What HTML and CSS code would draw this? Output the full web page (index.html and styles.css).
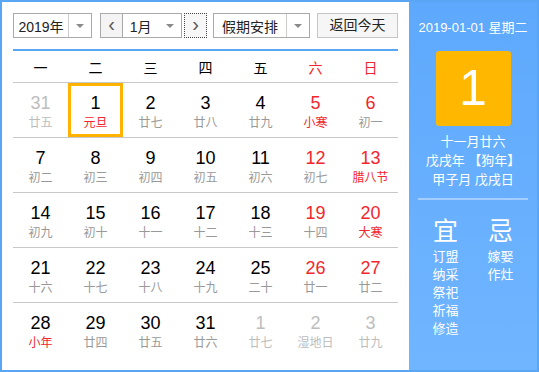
FILE: index.html
```html
<!DOCTYPE html>
<html lang="zh-CN">
<head>
    <meta charset="UTF-8">
    <title>万年历</title>
    <link rel="stylesheet" href="styles.css">
</head>
<body>
    <div class="calendar">
        <div class="main">
            <div class="toolbar">
                <div class="select year-select">
                    <span class="select-text">2019年</span>
                    <span class="select-arrow"><i></i></span>
                </div>
                <div class="month-group">
                    <span class="nav-btn">&lsaquo;</span>
                    <div class="select month-select">
                        <span class="select-text">1月</span>
                        <span class="select-arrow plain"><i></i></span>
                    </div>
                    <span class="nav-btn focus">&rsaquo;</span>
                </div>
                <div class="select holiday-select">
                    <span class="select-text">假期安排</span>
                    <span class="select-arrow"><i></i></span>
                </div>
                <span class="today-btn">返回今天</span>
            </div>

            <div class="weekdays">
                <span>一</span><span>二</span><span>三</span><span>四</span><span>五</span>
                <span class="red">六</span><span class="red">日</span>
            </div>

            <div class="days">
                <div class="row">
                    <div class="day other"><b>31</b><small>廿五</small></div>
                    <div class="day active"><b>1</b><small class="red">元旦</small></div>
                    <div class="day"><b>2</b><small>廿七</small></div>
                    <div class="day"><b>3</b><small>廿八</small></div>
                    <div class="day"><b>4</b><small>廿九</small></div>
                    <div class="day weekend"><b>5</b><small class="red">小寒</small></div>
                    <div class="day weekend"><b>6</b><small>初一</small></div>
                </div>
                <div class="row">
                    <div class="day"><b>7</b><small>初二</small></div>
                    <div class="day"><b>8</b><small>初三</small></div>
                    <div class="day"><b>9</b><small>初四</small></div>
                    <div class="day"><b>10</b><small>初五</small></div>
                    <div class="day"><b>11</b><small>初六</small></div>
                    <div class="day weekend"><b>12</b><small>初七</small></div>
                    <div class="day weekend"><b>13</b><small class="red">腊八节</small></div>
                </div>
                <div class="row">
                    <div class="day"><b>14</b><small>初九</small></div>
                    <div class="day"><b>15</b><small>初十</small></div>
                    <div class="day"><b>16</b><small>十一</small></div>
                    <div class="day"><b>17</b><small>十二</small></div>
                    <div class="day"><b>18</b><small>十三</small></div>
                    <div class="day weekend"><b>19</b><small>十四</small></div>
                    <div class="day weekend"><b>20</b><small class="red">大寒</small></div>
                </div>
                <div class="row">
                    <div class="day"><b>21</b><small>十六</small></div>
                    <div class="day"><b>22</b><small>十七</small></div>
                    <div class="day"><b>23</b><small>十八</small></div>
                    <div class="day"><b>24</b><small>十九</small></div>
                    <div class="day"><b>25</b><small>二十</small></div>
                    <div class="day weekend"><b>26</b><small>廿一</small></div>
                    <div class="day weekend"><b>27</b><small>廿二</small></div>
                </div>
                <div class="row">
                    <div class="day"><b>28</b><small class="red">小年</small></div>
                    <div class="day"><b>29</b><small>廿四</small></div>
                    <div class="day"><b>30</b><small>廿五</small></div>
                    <div class="day"><b>31</b><small>廿六</small></div>
                    <div class="day other"><b>1</b><small>廿七</small></div>
                    <div class="day other"><b>2</b><small>湿地日</small></div>
                    <div class="day other"><b>3</b><small>廿九</small></div>
                </div>
            </div>
        </div>

        <div class="side">
            <p class="side-date">2019-01-01 星期二</p>
            <div class="big-day">1</div>
            <div class="lunar">
                <p>十一月廿六</p>
                <p>戊戌年 【狗年】</p>
                <p>甲子月 戊戌日</p>
            </div>
            <div class="advice">
                <div class="advice-col">
                    <h3>宜</h3>
                    <p>订盟</p>
                    <p>纳采</p>
                    <p>祭祀</p>
                    <p>祈福</p>
                    <p>修造</p>
                </div>
                <div class="advice-col">
                    <h3>忌</h3>
                    <p>嫁娶</p>
                    <p>作灶</p>
                </div>
            </div>
        </div>
    </div>
</body>
</html>
```

FILE: styles.css
```css
*{
    margin: 0;
    padding: 0;
    box-sizing: border-box;
}

body{
    font-family: "Liberation Sans", "Noto Sans CJK SC", sans-serif;
    color: #000;
    background: #fff;
}

.calendar{
    width: 539px;
    height: 372px;
    border: 2px solid #5aa6f5;
    display: flex;
}

.main{
    width: 407px;
    padding: 11px 11px 0 11px;
    background: #fff;
}

/* toolbar */
.toolbar{
    display: flex;
    align-items: center;
    height: 25px;
}

.select{
    display: flex;
    height: 25px;
    border: 1px solid #aaa;
    background: #fff;
    font-size: 14px;
    color: #222;
}

.select-text{
    display: flex;
    align-items: center;
    justify-content: center;
}

.select-arrow{
    width: 23px;
    border-left: 1px solid #ccc;
    display: flex;
    align-items: center;
    justify-content: center;
}

.select-arrow.plain{
    border-left: none;
}

.select-arrow i{
    width: 0;
    height: 0;
    border-left: 4px solid transparent;
    border-right: 4px solid transparent;
    border-top: 4px solid #8a8a8a;
}

.year-select{
    width: 79px;
}
.year-select .select-text{
    width: 54px;
}

.month-group{
    display: flex;
    margin-left: 8px;
}

.nav-btn{
    width: 23px;
    height: 25px;
    border: 1px solid #aaa;
    background: #f4f4f4;
    color: #555;
    font-size: 20px;
    line-height: 21px;
    text-align: center;
}

.nav-btn.focus{
    border: 1px dotted #444;
    margin-left: 2px;
    background: #f7f7f7;
}

.month-select{
    width: 59px;
    border-left: none;
}
.month-select .select-text{
    width: 36px;
}

.holiday-select{
    width: 97px;
    margin-left: 6px;
}
.holiday-select .select-text{
    width: 72px;
}

.today-btn{
    margin-left: 7px;
    width: 82px;
    height: 25px;
    border: 1px solid #c6c6c6;
    background: #f6f6f6;
    font-size: 14px;
    line-height: 23px;
    text-align: center;
    color: #222;
}

/* week header */
.weekdays{
    margin-top: 11px;
    border-top: 2px solid #5aa6f5;
    border-bottom: 1px solid #c8c8c8;
    height: 34px;
    display: grid;
    grid-template-columns: repeat(7, 55px);
    align-items: center;
    font-size: 14px;
}

.weekdays span{
    text-align: center;
}

.red{
    color: #f2262c;
}

/* days */
.row{
    display: grid;
    grid-template-columns: repeat(7, 55px);
    height: 55px;
    border-bottom: 1px solid #c8c8c8;
}

.row:last-child{
    border-bottom: none;
}

.day{
    display: flex;
    flex-direction: column;
    align-items: center;
    padding-top: 10px;
}

.day b{
    font-weight: normal;
    font-size: 18px;
    line-height: 21px;
}

.day small{
    font-size: 12px;
    line-height: 18px;
    color: #999;
}

.day small.red{
    color: #f2262c;
}

.day.weekend b{
    color: #f2262c;
}

.day.other b,
.day.other small{
    color: #bdbdbd;
}

.day.active{
    border: 3px solid #ffb300;
    padding-top: 7px;
}

/* side panel */
.side{
    flex: 1;
    background: linear-gradient(#5ea9fd, #70b5ff);
    color: #fff;
    display: flex;
    flex-direction: column;
    align-items: center;
}

.side-date{
    margin-top: 18px;
    font-size: 13px;
    line-height: 16px;
}

.big-day{
    margin-top: 15px;
    width: 75px;
    height: 75px;
    border-radius: 3px;
    background: #ffb700;
    font-size: 50px;
    line-height: 75px;
    text-align: center;
}

.lunar{
    margin-top: 6px;
    width: 110px;
    padding-bottom: 9px;
    border-bottom: 2px solid #a5cdfd;
    text-align: center;
    font-size: 13px;
    line-height: 19px;
}

.advice{
    display: flex;
    justify-content: center;
    gap: 25px;
    margin-top: 16px;
}

.advice-col{
    width: 30px;
    text-align: center;
}

.advice-col h3{
    font-size: 25px;
    font-weight: normal;
    line-height: 30px;
    margin-bottom: 2px;
}

.advice-col p{
    font-size: 13px;
    line-height: 18px;
}
```
